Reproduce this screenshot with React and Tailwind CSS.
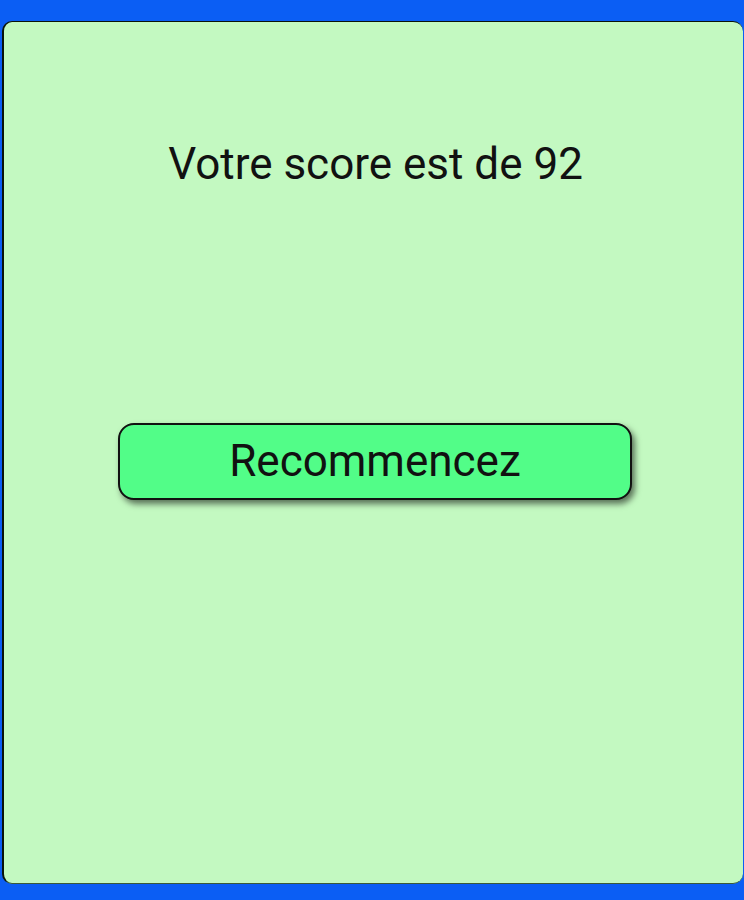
export default function App() {
  return (
    <div className="w-[744px] h-[900px] bg-[#0b5ef4] overflow-hidden pt-[21px] pl-[2px]" style={{ fontFamily: 'Roboto, "Noto Sans", sans-serif' }}>
      <div className="w-[741px] h-[863px] bg-[#c3f9c1] rounded-[10px] border-l-[2px] border-t-[1px] border-b-[1px] border-l-[#0a140a] border-t-[#0a140a] border-b-[#3a5a3a] flex flex-col items-center">
        <div className="mt-[120px] text-[44px] leading-[44px] text-[#111111] pl-[4px]">Votre score est de 92</div>
        <button className="mt-[237px] w-[514px] h-[77px] ml-[3px] rounded-[16px] bg-[#52fd88] border-[2px] border-[#111111] shadow-[3px_4px_6px_rgba(0,0,0,0.55)] flex items-center justify-center text-[44px] leading-[44px] text-[#111111] pb-[2px]">
          Recommencez
        </button>
      </div>
    </div>
  );
}
